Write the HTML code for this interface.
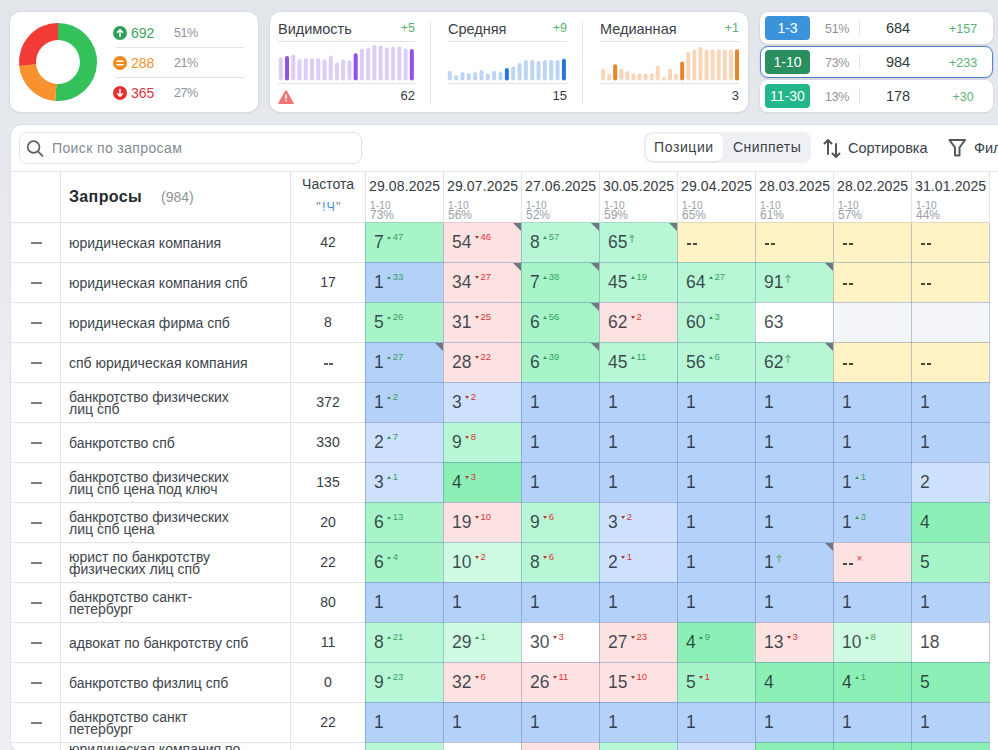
<!DOCTYPE html>
<html><head><meta charset="utf-8">
<style>
*{box-sizing:border-box;margin:0;padding:0}
html,body{width:998px;height:750px;overflow:hidden}
body{background:linear-gradient(to bottom,#e2e5ea 0px,#e5e8ec 120px,#eceef1 400px,#eceef1 750px);font-family:"Liberation Sans", sans-serif;color:#333a44;position:relative}
.abs{position:absolute}
.card{position:absolute;background:#fff;border-radius:10px;box-shadow:0 0 0 1px rgba(30,40,60,.035),0 1px 3px rgba(30,40,60,.06)}
.t{position:absolute;white-space:nowrap;line-height:1}
.cell{position:absolute;width:78px;height:40px}
.cell .in{position:absolute;left:9px;top:12px;display:flex;align-items:flex-start;white-space:nowrap}
.cell .v{font-size:17.5px;line-height:17px;color:rgba(15,22,35,0.78)}
.cell .up,.cell .dn{font-size:9.5px;line-height:10px;margin-left:3.5px;margin-top:-2px}
.cell .up{color:#3aa35f}
.cell .dn{color:#d9343a}
.tu,.td{display:inline-block;width:0;height:0;border-left:2px solid transparent;border-right:2px solid transparent;margin-right:1.5px;vertical-align:1.5px}
.tu{border-bottom:3px solid #3a9a5c}
.td{border-top:3px solid #b23a30}
.dd{display:flex;margin-top:9px;margin-left:0.5px;height:2px}
.dd i{display:block;width:4px;height:1.6px;background:#4a4636;margin-right:2px}
.corner{position:absolute;right:0;top:1px;width:0;height:0;border-top:8px solid #6f7884;border-left:8px solid transparent}
.ar{display:block;margin-left:2px;margin-top:-0.5px}
.xx{font-size:10px;line-height:10px;color:#d9343a;margin-left:2px;margin-top:0px}
.q{position:absolute;left:69px;font-size:14px;line-height:11.6px;color:#40454c;white-space:nowrap}
.fr{position:absolute;left:291px;width:74px;text-align:center;font-size:14px;line-height:14px;color:#363b43}
.dash{position:absolute;left:31px;width:11px;height:2px;background:#7a8088}
</style></head><body>

<div class="card" style="left:10px;top:12px;width:248px;height:100px"></div>
<svg class="abs" style="left:0;top:0" width="260" height="120">
<path d="M58.00,23.00 A39,39 0 1 1 55.28,100.90 L56.47,83.95 A22,22 0 1 0 58.00,40.00 Z" fill="#35c15a"/>
<path d="M55.28,100.90 A39,39 0 0 1 19.21,66.08 L36.12,64.30 A22,22 0 0 0 56.47,83.95 Z" fill="#f7922e"/>
<path d="M19.21,66.08 A39,39 0 0 1 58.00,23.00 L58.00,40.00 A22,22 0 0 0 36.12,64.30 Z" fill="#f23b36"/>
<circle cx="120" cy="33" r="7" fill="#2e9e5b"/><path d="M120,36.5 V30 M117.5,32.3 L120,29.8 L122.5,32.3" stroke="#fff" stroke-width="1.5" fill="none" stroke-linecap="round" stroke-linejoin="round"/>
<circle cx="120" cy="63" r="7" fill="#f08a1c"/><path d="M117,61.3 H123 M117,64.7 H123" stroke="#fff" stroke-width="1.6" stroke-linecap="round"/>
<circle cx="120" cy="93" r="7" fill="#e23131"/><path d="M120,89.5 V96 M117.5,93.7 L120,96.2 L122.5,93.7" stroke="#fff" stroke-width="1.5" fill="none" stroke-linecap="round" stroke-linejoin="round"/>
<rect x="116" y="47" width="128" height="1" fill="#dfe3e8"/><rect x="116" y="77" width="128" height="1" fill="#dfe3e8"/>
</svg>
<div class="t" style="left:131px;top:26px;font-size:14px;color:#3ea45f">692</div>
<div class="t" style="left:174px;top:27px;font-size:12.5px;letter-spacing:-0.4px;color:#8e949c">51%</div>
<div class="t" style="left:131px;top:56px;font-size:14px;color:#f0922f">288</div>
<div class="t" style="left:174px;top:57px;font-size:12.5px;letter-spacing:-0.4px;color:#8e949c">21%</div>
<div class="t" style="left:131px;top:86px;font-size:14px;color:#d9363e">365</div>
<div class="t" style="left:174px;top:87px;font-size:12.5px;letter-spacing:-0.4px;color:#8e949c">27%</div>
<div class="card" style="left:270px;top:12px;width:478px;height:100px"></div>
<svg class="abs" style="left:0;top:0" width="998" height="120">
<rect x="430" y="20" width="1" height="84" fill="#e6e9ee"/>
<rect x="582" y="20" width="1" height="84" fill="#e6e9ee"/>
<rect x="278" y="41" width="137" height="1" fill="#dfe3e8"/>
<rect x="278" y="83" width="137" height="1" fill="#dfe3e8"/>
<rect x="448" y="41" width="119" height="1" fill="#dfe3e8"/>
<rect x="448" y="83" width="119" height="1" fill="#dfe3e8"/>
<rect x="600" y="41" width="139" height="1" fill="#dfe3e8"/>
<rect x="600" y="83" width="139" height="1" fill="#dfe3e8"/>
<rect x="278.80" y="57.20" width="4" height="23.30" rx="2" fill="#dccdf6"/>
<rect x="285.04" y="56.10" width="4" height="24.40" rx="2" fill="#9550e6"/>
<rect x="291.28" y="54.60" width="4" height="25.90" rx="2" fill="#dccdf6"/>
<rect x="297.52" y="59.30" width="4" height="21.20" rx="2" fill="#dccdf6"/>
<rect x="303.76" y="58.30" width="4" height="22.20" rx="2" fill="#dccdf6"/>
<rect x="310.00" y="58.30" width="4" height="22.20" rx="2" fill="#dccdf6"/>
<rect x="316.24" y="58.30" width="4" height="22.20" rx="2" fill="#dccdf6"/>
<rect x="322.48" y="59.30" width="4" height="21.20" rx="2" fill="#dccdf6"/>
<rect x="328.72" y="55.40" width="4" height="25.10" rx="2" fill="#dccdf6"/>
<rect x="334.96" y="62.60" width="4" height="17.90" rx="2" fill="#dccdf6"/>
<rect x="341.20" y="59.30" width="4" height="21.20" rx="2" fill="#dccdf6"/>
<rect x="347.44" y="60.40" width="4" height="20.10" rx="2" fill="#dccdf6"/>
<rect x="353.68" y="53.20" width="4" height="27.30" rx="2" fill="#9550e6"/>
<rect x="359.92" y="48.40" width="4" height="32.10" rx="2" fill="#dccdf6"/>
<rect x="366.16" y="48.10" width="4" height="32.40" rx="2" fill="#dccdf6"/>
<rect x="372.40" y="44.70" width="4" height="35.80" rx="2" fill="#dccdf6"/>
<rect x="378.64" y="45.50" width="4" height="35.00" rx="2" fill="#dccdf6"/>
<rect x="384.88" y="47.40" width="4" height="33.10" rx="2" fill="#dccdf6"/>
<rect x="391.12" y="46.60" width="4" height="33.90" rx="2" fill="#dccdf6"/>
<rect x="397.36" y="46.60" width="4" height="33.90" rx="2" fill="#dccdf6"/>
<rect x="403.60" y="48.40" width="4" height="32.10" rx="2" fill="#dccdf6"/>
<rect x="409.84" y="49.10" width="4" height="31.40" rx="2" fill="#9550e6"/>
<rect x="447.80" y="70.90" width="4" height="9.60" rx="2" fill="#bcd5f6"/>
<rect x="454.14" y="75.10" width="4" height="5.40" rx="2" fill="#bcd5f6"/>
<rect x="460.48" y="72.10" width="4" height="8.40" rx="2" fill="#bcd5f6"/>
<rect x="466.82" y="73.00" width="4" height="7.50" rx="2" fill="#bcd5f6"/>
<rect x="473.16" y="72.00" width="4" height="8.50" rx="2" fill="#bcd5f6"/>
<rect x="479.50" y="70.10" width="4" height="10.40" rx="2" fill="#bcd5f6"/>
<rect x="485.84" y="73.40" width="4" height="7.10" rx="2" fill="#bcd5f6"/>
<rect x="492.18" y="70.90" width="4" height="9.60" rx="2" fill="#bcd5f6"/>
<rect x="498.52" y="72.10" width="4" height="8.40" rx="2" fill="#bcd5f6"/>
<rect x="504.86" y="68.10" width="4" height="12.40" rx="2" fill="#2674e2"/>
<rect x="511.20" y="66.40" width="4" height="14.10" rx="2" fill="#bcd5f6"/>
<rect x="517.54" y="63.10" width="4" height="17.40" rx="2" fill="#bcd5f6"/>
<rect x="523.88" y="60.10" width="4" height="20.40" rx="2" fill="#bcd5f6"/>
<rect x="530.22" y="60.10" width="4" height="20.40" rx="2" fill="#bcd5f6"/>
<rect x="536.56" y="61.10" width="4" height="19.40" rx="2" fill="#bcd5f6"/>
<rect x="542.90" y="60.10" width="4" height="20.40" rx="2" fill="#bcd5f6"/>
<rect x="549.24" y="60.10" width="4" height="20.40" rx="2" fill="#bcd5f6"/>
<rect x="555.58" y="60.10" width="4" height="20.40" rx="2" fill="#bcd5f6"/>
<rect x="561.92" y="58.80" width="4" height="21.70" rx="2" fill="#2674e2"/>
<rect x="601.00" y="68.50" width="4" height="12.00" rx="2" fill="#f9d6b8"/>
<rect x="607.09" y="74.00" width="4" height="6.50" rx="2" fill="#f9d6b8"/>
<rect x="613.18" y="64.20" width="4" height="16.30" rx="2" fill="#e8842c"/>
<rect x="619.27" y="68.50" width="4" height="12.00" rx="2" fill="#f9d6b8"/>
<rect x="625.36" y="71.00" width="4" height="9.50" rx="2" fill="#f9d6b8"/>
<rect x="631.45" y="73.60" width="4" height="6.90" rx="2" fill="#f9d6b8"/>
<rect x="637.54" y="73.60" width="4" height="6.90" rx="2" fill="#f9d6b8"/>
<rect x="643.63" y="73.60" width="4" height="6.90" rx="2" fill="#f9d6b8"/>
<rect x="649.72" y="73.60" width="4" height="6.90" rx="2" fill="#f9d6b8"/>
<rect x="655.81" y="65.50" width="4" height="15.00" rx="2" fill="#f9d6b8"/>
<rect x="661.90" y="77.00" width="4" height="3.50" rx="2" fill="#f9d6b8"/>
<rect x="667.99" y="68.50" width="4" height="12.00" rx="2" fill="#f9d6b8"/>
<rect x="674.08" y="73.60" width="4" height="6.90" rx="2" fill="#f9d6b8"/>
<rect x="680.17" y="61.50" width="4" height="19.00" rx="2" fill="#e8842c"/>
<rect x="686.26" y="51.50" width="4" height="29.00" rx="2" fill="#f9d6b8"/>
<rect x="692.35" y="49.50" width="4" height="31.00" rx="2" fill="#f9d6b8"/>
<rect x="698.44" y="47.00" width="4" height="33.50" rx="2" fill="#f9d6b8"/>
<rect x="704.53" y="49.50" width="4" height="31.00" rx="2" fill="#f9d6b8"/>
<rect x="710.62" y="49.50" width="4" height="31.00" rx="2" fill="#f9d6b8"/>
<rect x="716.71" y="49.50" width="4" height="31.00" rx="2" fill="#f9d6b8"/>
<rect x="722.80" y="49.50" width="4" height="31.00" rx="2" fill="#f9d6b8"/>
<rect x="728.89" y="49.50" width="4" height="31.00" rx="2" fill="#f9d6b8"/>
<rect x="734.98" y="49.20" width="4" height="31.30" rx="2" fill="#e8842c"/>
<path d="M286,91 L293,103.3 L279,103.3 Z" fill="#ee7676" stroke="#ee7676" stroke-width="1.6" stroke-linejoin="round"/><rect x="285.25" y="94.5" width="1.5" height="4.5" fill="#fff"/><rect x="285.25" y="100" width="1.5" height="1.5" fill="#fff"/>
</svg>
<div class="t" style="left:278px;top:22px;font-size:14.5px;color:#3c4149">Видимость</div>
<div class="t" style="left:355px;width:60px;text-align:right;top:22px;font-size:12.5px;color:#5bb277">+5</div>
<div class="t" style="left:355px;width:60px;text-align:right;top:89px;font-size:13px;color:#333a44">62</div>
<div class="t" style="left:448px;top:22px;font-size:14.5px;color:#3c4149">Средняя</div>
<div class="t" style="left:507px;width:60px;text-align:right;top:22px;font-size:12.5px;color:#5bb277">+9</div>
<div class="t" style="left:507px;width:60px;text-align:right;top:89px;font-size:13px;color:#333a44">15</div>
<div class="t" style="left:600px;top:22px;font-size:14.5px;color:#3c4149">Медианная</div>
<div class="t" style="left:679px;width:60px;text-align:right;top:22px;font-size:12.5px;color:#5bb277">+1</div>
<div class="t" style="left:679px;width:60px;text-align:right;top:89px;font-size:13px;color:#333a44">3</div>
<div class="card" style="left:760px;top:12px;width:233px;height:32px;border-radius:8px;"></div>
<div class="abs" style="left:765px;top:16px;width:45px;height:24px;border-radius:4px;background:#3b93dc;color:#fff;font-size:14px;line-height:24px;text-align:center">1-3</div>
<div class="t" style="left:825px;top:23px;font-size:12.5px;letter-spacing:-0.3px;color:#8e949c">51%</div>
<div class="abs" style="left:859px;top:20px;width:1px;height:16px;background:#e3e6ea"></div>
<div class="t" style="left:868px;width:60px;text-align:center;top:21px;font-size:14.5px;color:#33383f">684</div>
<div class="t" style="left:933px;width:60px;text-align:center;top:23px;font-size:12.5px;color:#5bb277">+157</div>
<div class="card" style="left:760px;top:46px;width:233px;height:32px;border-radius:8px;border:1px solid #4f82d4;"></div>
<div class="abs" style="left:765px;top:50px;width:45px;height:24px;border-radius:4px;background:#2a8f5f;color:#fff;font-size:14px;line-height:24px;text-align:center">1-10</div>
<div class="t" style="left:825px;top:57px;font-size:12.5px;letter-spacing:-0.3px;color:#8e949c">73%</div>
<div class="abs" style="left:859px;top:54px;width:1px;height:16px;background:#e3e6ea"></div>
<div class="t" style="left:868px;width:60px;text-align:center;top:55px;font-size:14.5px;color:#33383f">984</div>
<div class="t" style="left:933px;width:60px;text-align:center;top:57px;font-size:12.5px;color:#5bb277">+233</div>
<div class="card" style="left:760px;top:80px;width:233px;height:32px;border-radius:8px;"></div>
<div class="abs" style="left:765px;top:84px;width:45px;height:24px;border-radius:4px;background:#22b68a;color:#fff;font-size:14px;line-height:24px;text-align:center">11-30</div>
<div class="t" style="left:825px;top:91px;font-size:12.5px;letter-spacing:-0.3px;color:#8e949c">13%</div>
<div class="abs" style="left:859px;top:88px;width:1px;height:16px;background:#e3e6ea"></div>
<div class="t" style="left:868px;width:60px;text-align:center;top:89px;font-size:14.5px;color:#33383f">178</div>
<div class="t" style="left:933px;width:60px;text-align:center;top:91px;font-size:12.5px;color:#5bb277">+30</div>
<div class="abs" style="left:10px;top:124px;width:1000px;height:629px;background:#fff;border:1px solid #dcdfe3;border-radius:12px"></div>
<div class="abs" style="left:19px;top:132px;width:343px;height:32px;border:1px solid #dfe2e7;border-radius:8px;background:#fff"></div>
<svg class="abs" style="left:0;top:120px" width="60" height="50"><circle cx="33.6" cy="27" r="5.9" stroke="#585e68" stroke-width="1.7" fill="none"/><path d="M38,31.4 L42.5,35.8" stroke="#585e68" stroke-width="1.7" stroke-linecap="round"/></svg>
<div class="t" style="left:52px;top:141px;font-size:14px;letter-spacing:0.38px;color:#858b94">Поиск по запросам</div>
<div class="abs" style="left:644px;top:132px;width:167px;height:31px;border-radius:8px;background:#eef0f4"></div>
<div class="abs" style="left:646px;top:134px;width:77px;height:27px;border-radius:7px;background:#fff;box-shadow:0 1px 2px rgba(0,0,0,.05)"></div>
<div class="t" style="left:654px;top:140px;font-size:14px;letter-spacing:0.6px;color:#3c4149">Позиции</div>
<div class="t" style="left:733px;top:140px;font-size:14px;letter-spacing:0.45px;color:#3c4149">Сниппеты</div>
<svg class="abs" style="left:816px;top:130px" width="40" height="34"><path d="M12,10 V24 M8.5,13.5 L12,10 L15.5,13.5" stroke="#50565f" stroke-width="2" fill="none" stroke-linecap="round" stroke-linejoin="round"/><path d="M20,14 V27 M16.5,23.5 L20,27 L23.5,23.5" stroke="#50565f" stroke-width="2" fill="none" stroke-linecap="round" stroke-linejoin="round"/></svg>
<div class="t" style="left:848px;top:141px;font-size:14.5px;color:#3c4149">Сортировка</div>
<svg class="abs" style="left:940px;top:130px" width="40" height="34"><path d="M9.5,10 H25 L19.5,17.5 V25.5 L15,25.5 V17.5 Z" stroke="#50565f" stroke-width="2" fill="none" stroke-linejoin="round"/></svg>
<div class="t" style="left:974px;top:141px;font-size:14.5px;color:#3c4149">Фильтр</div>
<svg class="abs" style="left:0;top:0" width="998" height="750">
<rect x="11" y="171" width="987" height="1" fill="#e1e4e9"/>
<rect x="11" y="222" width="354" height="1" fill="#e1e4e9"/>
<rect x="11" y="262" width="354" height="1" fill="#e1e4e9"/>
<rect x="11" y="302" width="354" height="1" fill="#e1e4e9"/>
<rect x="11" y="342" width="354" height="1" fill="#e1e4e9"/>
<rect x="11" y="382" width="354" height="1" fill="#e1e4e9"/>
<rect x="11" y="422" width="354" height="1" fill="#e1e4e9"/>
<rect x="11" y="462" width="354" height="1" fill="#e1e4e9"/>
<rect x="11" y="502" width="354" height="1" fill="#e1e4e9"/>
<rect x="11" y="542" width="354" height="1" fill="#e1e4e9"/>
<rect x="11" y="582" width="354" height="1" fill="#e1e4e9"/>
<rect x="11" y="622" width="354" height="1" fill="#e1e4e9"/>
<rect x="11" y="662" width="354" height="1" fill="#e1e4e9"/>
<rect x="11" y="702" width="354" height="1" fill="#e1e4e9"/>
<rect x="11" y="742" width="354" height="1" fill="#e1e4e9"/>
<rect x="60" y="171" width="1" height="600" fill="#e1e4e9"/>
<rect x="290" y="171" width="1" height="600" fill="#e1e4e9"/>
<rect x="365" y="171" width="1" height="51" fill="#e1e4e9"/>
<rect x="443" y="171" width="1" height="51" fill="#e1e4e9"/>
<rect x="521" y="171" width="1" height="51" fill="#e1e4e9"/>
<rect x="599" y="171" width="1" height="51" fill="#e1e4e9"/>
<rect x="677" y="171" width="1" height="51" fill="#e1e4e9"/>
<rect x="755" y="171" width="1" height="51" fill="#e1e4e9"/>
<rect x="833" y="171" width="1" height="51" fill="#e1e4e9"/>
<rect x="911" y="171" width="1" height="51" fill="#e1e4e9"/>
<rect x="989" y="171" width="1" height="51" fill="#e1e4e9"/>
</svg>
<div class="t" style="left:69px;top:189px;font-size:16px;letter-spacing:0.35px;font-weight:bold;color:#262b33">Запросы</div>
<div class="t" style="left:161px;top:190px;font-size:14px;color:#8e949c">(984)</div>
<div class="t" style="left:291px;width:74px;text-align:center;top:177px;font-size:14px;color:#3c4149">Частота</div>
<div class="t" style="left:292px;width:74px;text-align:center;top:201px;font-size:12.5px;letter-spacing:1.2px;color:#4a8fd8"><span style="color:#7d8390">"</span>!Ч<span style="color:#7d8390">"</span></div>
<div class="t" style="left:369px;top:179px;font-size:14px;letter-spacing:0.12px;color:#363b43">29.08.2025</div>
<div class="t" style="left:370px;top:201px;font-size:10px;letter-spacing:0.2px;color:#9aa0a8">1-10</div>
<div class="t" style="left:370px;top:209px;font-size:12px;color:#9aa0a8">73%</div>
<div class="t" style="left:447px;top:179px;font-size:14px;letter-spacing:0.12px;color:#363b43">29.07.2025</div>
<div class="t" style="left:448px;top:201px;font-size:10px;letter-spacing:0.2px;color:#9aa0a8">1-10</div>
<div class="t" style="left:448px;top:209px;font-size:12px;color:#9aa0a8">56%</div>
<div class="t" style="left:525px;top:179px;font-size:14px;letter-spacing:0.12px;color:#363b43">27.06.2025</div>
<div class="t" style="left:526px;top:201px;font-size:10px;letter-spacing:0.2px;color:#9aa0a8">1-10</div>
<div class="t" style="left:526px;top:209px;font-size:12px;color:#9aa0a8">52%</div>
<div class="t" style="left:603px;top:179px;font-size:14px;letter-spacing:0.12px;color:#363b43">30.05.2025</div>
<div class="t" style="left:604px;top:201px;font-size:10px;letter-spacing:0.2px;color:#9aa0a8">1-10</div>
<div class="t" style="left:604px;top:209px;font-size:12px;color:#9aa0a8">59%</div>
<div class="t" style="left:681px;top:179px;font-size:14px;letter-spacing:0.12px;color:#363b43">29.04.2025</div>
<div class="t" style="left:682px;top:201px;font-size:10px;letter-spacing:0.2px;color:#9aa0a8">1-10</div>
<div class="t" style="left:682px;top:209px;font-size:12px;color:#9aa0a8">65%</div>
<div class="t" style="left:759px;top:179px;font-size:14px;letter-spacing:0.12px;color:#363b43">28.03.2025</div>
<div class="t" style="left:760px;top:201px;font-size:10px;letter-spacing:0.2px;color:#9aa0a8">1-10</div>
<div class="t" style="left:760px;top:209px;font-size:12px;color:#9aa0a8">61%</div>
<div class="t" style="left:837px;top:179px;font-size:14px;letter-spacing:0.12px;color:#363b43">28.02.2025</div>
<div class="t" style="left:838px;top:201px;font-size:10px;letter-spacing:0.2px;color:#9aa0a8">1-10</div>
<div class="t" style="left:838px;top:209px;font-size:12px;color:#9aa0a8">57%</div>
<div class="t" style="left:915px;top:179px;font-size:14px;letter-spacing:0.12px;color:#363b43">31.01.2025</div>
<div class="t" style="left:916px;top:201px;font-size:10px;letter-spacing:0.2px;color:#9aa0a8">1-10</div>
<div class="t" style="left:916px;top:209px;font-size:12px;color:#9aa0a8">44%</div>
<div class="q" style="top:238px">юридическая компания</div>
<div class="fr" style="top:235px">42</div>
<div class="dash" style="top:242px"></div>
<div class="cell" style="left:365px;top:222px;background:#a6f4c8"><div class="in"><span class="v">7</span><span class="up"><i class="tu"></i>47</span></div></div>
<div class="cell" style="left:443px;top:222px;background:#fde2e2"><div class="in"><span class="v">54</span><span class="dn"><i class="td"></i>46</span></div><i class="corner"></i></div>
<div class="cell" style="left:521px;top:222px;background:#b8f7d5"><div class="in"><span class="v">8</span><span class="up"><i class="tu"></i>57</span></div><i class="corner"></i></div>
<div class="cell" style="left:599px;top:222px;background:#b8f7d5"><div class="in"><span class="v">65</span><svg class="ar" width="6" height="9"><path d="M3,8.5 V1.2 M1,3.4 L3,1.2 L5,3.4" stroke="#6db58c" stroke-width="1.3" fill="none" stroke-linecap="round" stroke-linejoin="round"/></svg></div><i class="corner"></i></div>
<div class="cell" style="left:677px;top:222px;background:#fdf3c5"><div class="in"><span class="dd"><i></i><i></i></span></div></div>
<div class="cell" style="left:755px;top:222px;background:#fdf3c5"><div class="in"><span class="dd"><i></i><i></i></span></div></div>
<div class="cell" style="left:833px;top:222px;background:#fdf3c5"><div class="in"><span class="dd"><i></i><i></i></span></div></div>
<div class="cell" style="left:911px;top:222px;background:#fdf3c5"><div class="in"><span class="dd"><i></i><i></i></span></div></div>
<div class="q" style="top:278px">юридическая компания спб</div>
<div class="fr" style="top:275px">17</div>
<div class="dash" style="top:282px"></div>
<div class="cell" style="left:365px;top:262px;background:#b4d1fa"><div class="in"><span class="v">1</span><span class="up"><i class="tu"></i>33</span></div></div>
<div class="cell" style="left:443px;top:262px;background:#fde2e2"><div class="in"><span class="v">34</span><span class="dn"><i class="td"></i>27</span></div><i class="corner"></i></div>
<div class="cell" style="left:521px;top:262px;background:#a6f4c8"><div class="in"><span class="v">7</span><span class="up"><i class="tu"></i>38</span></div><i class="corner"></i></div>
<div class="cell" style="left:599px;top:262px;background:#b8f7d5"><div class="in"><span class="v">45</span><span class="up"><i class="tu"></i>19</span></div></div>
<div class="cell" style="left:677px;top:262px;background:#b8f7d5"><div class="in"><span class="v">64</span><span class="up"><i class="tu"></i>27</span></div></div>
<div class="cell" style="left:755px;top:262px;background:#b8f7d5"><div class="in"><span class="v">91</span><svg class="ar" width="6" height="9"><path d="M3,8.5 V1.2 M1,3.4 L3,1.2 L5,3.4" stroke="#6db58c" stroke-width="1.3" fill="none" stroke-linecap="round" stroke-linejoin="round"/></svg></div><i class="corner"></i></div>
<div class="cell" style="left:833px;top:262px;background:#fdf3c5"><div class="in"><span class="dd"><i></i><i></i></span></div></div>
<div class="cell" style="left:911px;top:262px;background:#fdf3c5"><div class="in"><span class="dd"><i></i><i></i></span></div></div>
<div class="q" style="top:318px">юридическая фирма спб</div>
<div class="fr" style="top:315px">8</div>
<div class="dash" style="top:322px"></div>
<div class="cell" style="left:365px;top:302px;background:#a6f4c8"><div class="in"><span class="v">5</span><span class="up"><i class="tu"></i>26</span></div></div>
<div class="cell" style="left:443px;top:302px;background:#fde2e2"><div class="in"><span class="v">31</span><span class="dn"><i class="td"></i>25</span></div></div>
<div class="cell" style="left:521px;top:302px;background:#a6f4c8"><div class="in"><span class="v">6</span><span class="up"><i class="tu"></i>56</span></div><i class="corner"></i></div>
<div class="cell" style="left:599px;top:302px;background:#fde2e2"><div class="in"><span class="v">62</span><span class="dn"><i class="td"></i>2</span></div></div>
<div class="cell" style="left:677px;top:302px;background:#b8f7d5"><div class="in"><span class="v">60</span><span class="up"><i class="tu"></i>3</span></div></div>
<div class="cell" style="left:755px;top:302px;background:#ffffff"><div class="in"><span class="v">63</span></div></div>
<div class="cell" style="left:833px;top:302px;background:#f4f5f8"><div class="in"></div></div>
<div class="cell" style="left:911px;top:302px;background:#f4f5f8"><div class="in"></div></div>
<div class="q" style="top:358px">спб юридическая компания</div>
<div class="abs" style="left:324px;top:363px;width:9px;height:2px;display:flex;justify-content:space-between"><i style="display:block;width:4px;height:2px;background:#5a5e64"></i><i style="display:block;width:4px;height:2px;background:#5a5e64"></i></div>
<div class="dash" style="top:362px"></div>
<div class="cell" style="left:365px;top:342px;background:#b4d1fa"><div class="in"><span class="v">1</span><span class="up"><i class="tu"></i>27</span></div><i class="corner"></i></div>
<div class="cell" style="left:443px;top:342px;background:#fde2e2"><div class="in"><span class="v">28</span><span class="dn"><i class="td"></i>22</span></div></div>
<div class="cell" style="left:521px;top:342px;background:#a6f4c8"><div class="in"><span class="v">6</span><span class="up"><i class="tu"></i>39</span></div><i class="corner"></i></div>
<div class="cell" style="left:599px;top:342px;background:#b8f7d5"><div class="in"><span class="v">45</span><span class="up"><i class="tu"></i>11</span></div></div>
<div class="cell" style="left:677px;top:342px;background:#b8f7d5"><div class="in"><span class="v">56</span><span class="up"><i class="tu"></i>6</span></div></div>
<div class="cell" style="left:755px;top:342px;background:#b8f7d5"><div class="in"><span class="v">62</span><svg class="ar" width="6" height="9"><path d="M3,8.5 V1.2 M1,3.4 L3,1.2 L5,3.4" stroke="#6db58c" stroke-width="1.3" fill="none" stroke-linecap="round" stroke-linejoin="round"/></svg></div><i class="corner"></i></div>
<div class="cell" style="left:833px;top:342px;background:#fdf3c5"><div class="in"><span class="dd"><i></i><i></i></span></div></div>
<div class="cell" style="left:911px;top:342px;background:#fdf3c5"><div class="in"><span class="dd"><i></i><i></i></span></div></div>
<div class="q" style="top:392px">банкротство физических<br>лиц спб</div>
<div class="fr" style="top:395px">372</div>
<div class="dash" style="top:402px"></div>
<div class="cell" style="left:365px;top:382px;background:#b4d1fa"><div class="in"><span class="v">1</span><span class="up"><i class="tu"></i>2</span></div></div>
<div class="cell" style="left:443px;top:382px;background:#cde0fc"><div class="in"><span class="v">3</span><span class="dn"><i class="td"></i>2</span></div></div>
<div class="cell" style="left:521px;top:382px;background:#b4d1fa"><div class="in"><span class="v">1</span></div></div>
<div class="cell" style="left:599px;top:382px;background:#b4d1fa"><div class="in"><span class="v">1</span></div></div>
<div class="cell" style="left:677px;top:382px;background:#b4d1fa"><div class="in"><span class="v">1</span></div></div>
<div class="cell" style="left:755px;top:382px;background:#b4d1fa"><div class="in"><span class="v">1</span></div></div>
<div class="cell" style="left:833px;top:382px;background:#b4d1fa"><div class="in"><span class="v">1</span></div></div>
<div class="cell" style="left:911px;top:382px;background:#b4d1fa"><div class="in"><span class="v">1</span></div></div>
<div class="q" style="top:438px">банкротство спб</div>
<div class="fr" style="top:435px">330</div>
<div class="dash" style="top:442px"></div>
<div class="cell" style="left:365px;top:422px;background:#cde0fc"><div class="in"><span class="v">2</span><span class="up"><i class="tu"></i>7</span></div></div>
<div class="cell" style="left:443px;top:422px;background:#b8f7d5"><div class="in"><span class="v">9</span><span class="dn"><i class="td"></i>8</span></div></div>
<div class="cell" style="left:521px;top:422px;background:#b4d1fa"><div class="in"><span class="v">1</span></div></div>
<div class="cell" style="left:599px;top:422px;background:#b4d1fa"><div class="in"><span class="v">1</span></div></div>
<div class="cell" style="left:677px;top:422px;background:#b4d1fa"><div class="in"><span class="v">1</span></div></div>
<div class="cell" style="left:755px;top:422px;background:#b4d1fa"><div class="in"><span class="v">1</span></div></div>
<div class="cell" style="left:833px;top:422px;background:#b4d1fa"><div class="in"><span class="v">1</span></div></div>
<div class="cell" style="left:911px;top:422px;background:#b4d1fa"><div class="in"><span class="v">1</span></div></div>
<div class="q" style="top:472px">банкротство физических<br>лиц спб цена под ключ</div>
<div class="fr" style="top:475px">135</div>
<div class="dash" style="top:482px"></div>
<div class="cell" style="left:365px;top:462px;background:#cde0fc"><div class="in"><span class="v">3</span><span class="up"><i class="tu"></i>1</span></div></div>
<div class="cell" style="left:443px;top:462px;background:#8cf0b6"><div class="in"><span class="v">4</span><span class="dn"><i class="td"></i>3</span></div></div>
<div class="cell" style="left:521px;top:462px;background:#b4d1fa"><div class="in"><span class="v">1</span></div></div>
<div class="cell" style="left:599px;top:462px;background:#b4d1fa"><div class="in"><span class="v">1</span></div></div>
<div class="cell" style="left:677px;top:462px;background:#b4d1fa"><div class="in"><span class="v">1</span></div></div>
<div class="cell" style="left:755px;top:462px;background:#b4d1fa"><div class="in"><span class="v">1</span></div></div>
<div class="cell" style="left:833px;top:462px;background:#b4d1fa"><div class="in"><span class="v">1</span><span class="up"><i class="tu"></i>1</span></div></div>
<div class="cell" style="left:911px;top:462px;background:#cde0fc"><div class="in"><span class="v">2</span></div></div>
<div class="q" style="top:512px">банкротство физических<br>лиц спб цена</div>
<div class="fr" style="top:515px">20</div>
<div class="dash" style="top:522px"></div>
<div class="cell" style="left:365px;top:502px;background:#a6f4c8"><div class="in"><span class="v">6</span><span class="up"><i class="tu"></i>13</span></div></div>
<div class="cell" style="left:443px;top:502px;background:#fde2e2"><div class="in"><span class="v">19</span><span class="dn"><i class="td"></i>10</span></div></div>
<div class="cell" style="left:521px;top:502px;background:#b8f7d5"><div class="in"><span class="v">9</span><span class="dn"><i class="td"></i>6</span></div></div>
<div class="cell" style="left:599px;top:502px;background:#cde0fc"><div class="in"><span class="v">3</span><span class="dn"><i class="td"></i>2</span></div></div>
<div class="cell" style="left:677px;top:502px;background:#b4d1fa"><div class="in"><span class="v">1</span></div></div>
<div class="cell" style="left:755px;top:502px;background:#b4d1fa"><div class="in"><span class="v">1</span></div></div>
<div class="cell" style="left:833px;top:502px;background:#b4d1fa"><div class="in"><span class="v">1</span><span class="up"><i class="tu"></i>3</span></div></div>
<div class="cell" style="left:911px;top:502px;background:#8cf0b6"><div class="in"><span class="v">4</span></div></div>
<div class="q" style="top:552px">юрист по банкротству<br>физических лиц спб</div>
<div class="fr" style="top:555px">22</div>
<div class="dash" style="top:562px"></div>
<div class="cell" style="left:365px;top:542px;background:#a6f4c8"><div class="in"><span class="v">6</span><span class="up"><i class="tu"></i>4</span></div></div>
<div class="cell" style="left:443px;top:542px;background:#cefbe2"><div class="in"><span class="v">10</span><span class="dn"><i class="td"></i>2</span></div></div>
<div class="cell" style="left:521px;top:542px;background:#b8f7d5"><div class="in"><span class="v">8</span><span class="dn"><i class="td"></i>6</span></div></div>
<div class="cell" style="left:599px;top:542px;background:#cde0fc"><div class="in"><span class="v">2</span><span class="dn"><i class="td"></i>1</span></div></div>
<div class="cell" style="left:677px;top:542px;background:#b4d1fa"><div class="in"><span class="v">1</span></div></div>
<div class="cell" style="left:755px;top:542px;background:#b4d1fa"><div class="in"><span class="v">1</span><svg class="ar" width="6" height="9"><path d="M3,8.5 V1.2 M1,3.4 L3,1.2 L5,3.4" stroke="#6db58c" stroke-width="1.3" fill="none" stroke-linecap="round" stroke-linejoin="round"/></svg></div><i class="corner"></i></div>
<div class="cell" style="left:833px;top:542px;background:#fde2e2"><div class="in"><span class="dd"><i></i><i></i></span><span class="xx">&#215;</span></div></div>
<div class="cell" style="left:911px;top:542px;background:#a6f4c8"><div class="in"><span class="v">5</span></div></div>
<div class="q" style="top:592px">банкротство санкт-<br>петербург</div>
<div class="fr" style="top:595px">80</div>
<div class="dash" style="top:602px"></div>
<div class="cell" style="left:365px;top:582px;background:#b4d1fa"><div class="in"><span class="v">1</span></div></div>
<div class="cell" style="left:443px;top:582px;background:#b4d1fa"><div class="in"><span class="v">1</span></div></div>
<div class="cell" style="left:521px;top:582px;background:#b4d1fa"><div class="in"><span class="v">1</span></div></div>
<div class="cell" style="left:599px;top:582px;background:#b4d1fa"><div class="in"><span class="v">1</span></div></div>
<div class="cell" style="left:677px;top:582px;background:#b4d1fa"><div class="in"><span class="v">1</span></div></div>
<div class="cell" style="left:755px;top:582px;background:#b4d1fa"><div class="in"><span class="v">1</span></div></div>
<div class="cell" style="left:833px;top:582px;background:#b4d1fa"><div class="in"><span class="v">1</span></div></div>
<div class="cell" style="left:911px;top:582px;background:#b4d1fa"><div class="in"><span class="v">1</span></div></div>
<div class="q" style="top:638px">адвокат по банкротству спб</div>
<div class="fr" style="top:635px">11</div>
<div class="dash" style="top:642px"></div>
<div class="cell" style="left:365px;top:622px;background:#b8f7d5"><div class="in"><span class="v">8</span><span class="up"><i class="tu"></i>21</span></div></div>
<div class="cell" style="left:443px;top:622px;background:#cefbe2"><div class="in"><span class="v">29</span><span class="up"><i class="tu"></i>1</span></div></div>
<div class="cell" style="left:521px;top:622px;background:#ffffff"><div class="in"><span class="v">30</span><span class="dn"><i class="td"></i>3</span></div></div>
<div class="cell" style="left:599px;top:622px;background:#fde2e2"><div class="in"><span class="v">27</span><span class="dn"><i class="td"></i>23</span></div></div>
<div class="cell" style="left:677px;top:622px;background:#8cf0b6"><div class="in"><span class="v">4</span><span class="up"><i class="tu"></i>9</span></div></div>
<div class="cell" style="left:755px;top:622px;background:#fde2e2"><div class="in"><span class="v">13</span><span class="dn"><i class="td"></i>3</span></div></div>
<div class="cell" style="left:833px;top:622px;background:#cefbe2"><div class="in"><span class="v">10</span><span class="up"><i class="tu"></i>8</span></div></div>
<div class="cell" style="left:911px;top:622px;background:#ffffff"><div class="in"><span class="v">18</span></div></div>
<div class="q" style="top:678px">банкротство физлиц спб</div>
<div class="fr" style="top:675px">0</div>
<div class="dash" style="top:682px"></div>
<div class="cell" style="left:365px;top:662px;background:#b8f7d5"><div class="in"><span class="v">9</span><span class="up"><i class="tu"></i>23</span></div></div>
<div class="cell" style="left:443px;top:662px;background:#fde2e2"><div class="in"><span class="v">32</span><span class="dn"><i class="td"></i>6</span></div></div>
<div class="cell" style="left:521px;top:662px;background:#fde2e2"><div class="in"><span class="v">26</span><span class="dn"><i class="td"></i>11</span></div></div>
<div class="cell" style="left:599px;top:662px;background:#fde2e2"><div class="in"><span class="v">15</span><span class="dn"><i class="td"></i>10</span></div></div>
<div class="cell" style="left:677px;top:662px;background:#a6f4c8"><div class="in"><span class="v">5</span><span class="dn"><i class="td"></i>1</span></div></div>
<div class="cell" style="left:755px;top:662px;background:#8cf0b6"><div class="in"><span class="v">4</span></div></div>
<div class="cell" style="left:833px;top:662px;background:#8cf0b6"><div class="in"><span class="v">4</span><span class="up"><i class="tu"></i>1</span></div></div>
<div class="cell" style="left:911px;top:662px;background:#8cf0b6"><div class="in"><span class="v">5</span></div></div>
<div class="q" style="top:712px">банкротство санкт<br>петербург</div>
<div class="fr" style="top:715px">22</div>
<div class="dash" style="top:722px"></div>
<div class="cell" style="left:365px;top:702px;background:#b4d1fa"><div class="in"><span class="v">1</span></div></div>
<div class="cell" style="left:443px;top:702px;background:#b4d1fa"><div class="in"><span class="v">1</span></div></div>
<div class="cell" style="left:521px;top:702px;background:#b4d1fa"><div class="in"><span class="v">1</span></div></div>
<div class="cell" style="left:599px;top:702px;background:#b4d1fa"><div class="in"><span class="v">1</span></div></div>
<div class="cell" style="left:677px;top:702px;background:#b4d1fa"><div class="in"><span class="v">1</span></div></div>
<div class="cell" style="left:755px;top:702px;background:#b4d1fa"><div class="in"><span class="v">1</span></div></div>
<div class="cell" style="left:833px;top:702px;background:#b4d1fa"><div class="in"><span class="v">1</span></div></div>
<div class="cell" style="left:911px;top:702px;background:#b4d1fa"><div class="in"><span class="v">1</span></div></div>
<div class="q" style="top:744px">юридическая компания по<br>банкротству</div>
<div class="fr" style="top:755px"></div>
<div class="dash" style="top:762px"></div>
<div class="cell" style="left:365px;top:742px;background:#b8f7d5"><div class="in"></div></div>
<div class="cell" style="left:443px;top:742px;background:#ffffff"><div class="in"></div></div>
<div class="cell" style="left:521px;top:742px;background:#fde2e2"><div class="in"></div></div>
<div class="cell" style="left:599px;top:742px;background:#b8f7d5"><div class="in"></div></div>
<div class="cell" style="left:677px;top:742px;background:#cde0fc"><div class="in"></div></div>
<div class="cell" style="left:755px;top:742px;background:#8cf0b6"><div class="in"></div></div>
<div class="cell" style="left:833px;top:742px;background:#8cf0b6"><div class="in"></div></div>
<div class="cell" style="left:911px;top:742px;background:#8cf0b6"><div class="in"></div></div>
<svg class="abs" style="left:0;top:0" width="998" height="750">
<rect x="365" y="222" width="625" height="1" fill="rgba(40,50,70,0.12)"/>
<rect x="365" y="262" width="625" height="1" fill="rgba(50,80,150,0.3)"/>
<rect x="365" y="302" width="625" height="1" fill="rgba(50,80,150,0.3)"/>
<rect x="365" y="342" width="625" height="1" fill="rgba(50,80,150,0.3)"/>
<rect x="365" y="382" width="625" height="1" fill="rgba(50,80,150,0.3)"/>
<rect x="365" y="422" width="625" height="1" fill="rgba(50,80,150,0.3)"/>
<rect x="365" y="462" width="625" height="1" fill="rgba(50,80,150,0.3)"/>
<rect x="365" y="502" width="625" height="1" fill="rgba(50,80,150,0.3)"/>
<rect x="365" y="542" width="625" height="1" fill="rgba(50,80,150,0.3)"/>
<rect x="365" y="582" width="625" height="1" fill="rgba(50,80,150,0.3)"/>
<rect x="365" y="622" width="625" height="1" fill="rgba(50,80,150,0.3)"/>
<rect x="365" y="662" width="625" height="1" fill="rgba(50,80,150,0.3)"/>
<rect x="365" y="702" width="625" height="1" fill="rgba(50,80,150,0.3)"/>
<rect x="365" y="742" width="625" height="1" fill="rgba(50,80,150,0.3)"/>
<rect x="365" y="223" width="1" height="527" fill="rgba(50,80,150,0.3)"/>
<rect x="443" y="223" width="1" height="527" fill="rgba(50,80,150,0.3)"/>
<rect x="521" y="223" width="1" height="527" fill="rgba(50,80,150,0.3)"/>
<rect x="599" y="223" width="1" height="527" fill="rgba(50,80,150,0.3)"/>
<rect x="677" y="223" width="1" height="527" fill="rgba(50,80,150,0.3)"/>
<rect x="755" y="223" width="1" height="527" fill="rgba(50,80,150,0.3)"/>
<rect x="833" y="223" width="1" height="527" fill="rgba(50,80,150,0.3)"/>
<rect x="911" y="223" width="1" height="527" fill="rgba(50,80,150,0.3)"/>
<rect x="989" y="223" width="1" height="527" fill="rgba(50,80,150,0.3)"/>
</svg>
</body></html>
